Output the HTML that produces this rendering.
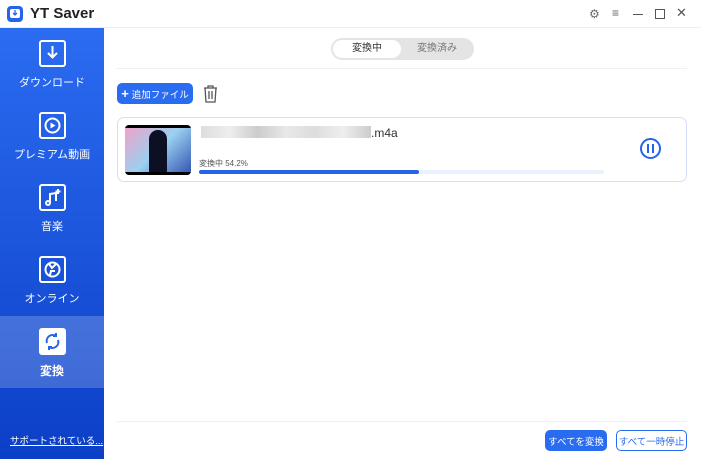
<!DOCTYPE html>
<html><head><meta charset="utf-8"><style>
*{margin:0;padding:0;box-sizing:border-box}
body{width:701px;height:459px;overflow:hidden;background:#fff;font-family:"Liberation Sans","Noto Sans CJK JP",sans-serif;position:relative}
.abs{position:absolute;white-space:nowrap}
.side{left:0;top:28px;width:104px;height:431px;background:linear-gradient(#2b6cf1,#0b3fc6)}
.item{position:absolute;left:0;width:104px;height:72px;color:#fff;font-size:11px;text-align:center}
.item .ic{position:absolute;left:39px;top:12px;width:27px;height:27px;border:2px solid #fff;border-radius:3px}
.item span{position:absolute;left:0;right:0;top:46px}
.btn{position:absolute;border-radius:5px;font-size:9.5px;white-space:nowrap;display:flex;align-items:center;justify-content:center}
</style></head><body>
<div class="abs" style="left:7px;top:6px;width:16px;height:16px;background:#2563eb;border-radius:4px"><div style="position:absolute;left:3px;top:3px;width:10px;height:9px;background:#fff;border-radius:2px"></div><svg style="position:absolute;left:5px;top:4px" width="6" height="7" viewBox="0 0 6 7" fill="none" stroke="#2563eb" stroke-width="1.3"><path d="M3 0v5M1 3l2 2 2-2"/></svg></div>
<div class="abs" style="left:30px;top:5px;font-size:15px;font-weight:bold;color:#222">YT Saver</div>
<div class="abs" style="left:589px;top:7px;font-size:12px;color:#666">⚙</div>
<div class="abs" style="left:612px;top:6px;font-size:12px;color:#666">≡</div>
<div class="abs" style="left:633px;top:14px;width:10px;height:1px;background:#555"></div>
<div class="abs" style="left:655px;top:9px;width:10px;height:10px;border:1.3px solid #555"></div>
<div class="abs" style="left:676px;top:5px;font-size:13px;color:#555">✕</div>
<div class="abs" style="left:0;top:27px;width:701px;height:1px;background:#eee"></div>
<div class="abs side">
<div class="item" style="top:0"><div class="ic"><svg width="23" height="23" viewBox="0 0 23 23" fill="none" stroke="#fff" stroke-width="2"><path d="M11.5 4v11M7 11l4.5 4.5L16 11"/></svg></div><span>ダウンロード</span></div>
<div class="item" style="top:72px"><div class="ic"><svg width="23" height="23" viewBox="0 0 23 23"><circle cx="11.5" cy="11.5" r="7" fill="none" stroke="#fff" stroke-width="2"/><path d="M9.5 8.5v6l5-3z" fill="#fff"/></svg></div><span>プレミアム動画</span></div>
<div class="item" style="top:144px"><div class="ic"><svg width="23" height="23" viewBox="0 0 23 23" fill="none" stroke="#fff" stroke-width="2"><path d="M9 17V8l6-1v8"/><circle cx="7" cy="17" r="2"/><path d="M17 3v5M14.5 5.5h5"/></svg></div><span>音楽</span></div>
<div class="item" style="top:216px"><div class="ic"><svg width="23" height="23" viewBox="0 0 23 23" fill="none" stroke="#fff" stroke-width="2"><circle cx="11.5" cy="11.5" r="7"/><path d="M8 6l3 4 4-4M9 17l1-4h4"/></svg></div><span>オンライン</span></div>
<div class="item" style="top:288px;background:rgba(255,255,255,0.2)"><div class="ic" style="background:#fff"><svg width="23" height="23" viewBox="0 0 23 23" fill="none" stroke="#2563eb" stroke-width="2"><path d="M6 13a6 6 0 0 1 9-7M17 10a6 6 0 0 1-9 7"/><path d="M15 3v3h-3M8 20v-3h3"/></svg></div><span style="font-weight:bold;font-size:12px">変換</span></div>
<div class="abs" style="left:10px;top:405px;font-size:9.5px;color:#fff;text-decoration:underline">サポートされている...</div>
</div>
<div class="abs" style="left:331px;top:38px;width:143px;height:22px;border-radius:11px;background:#e4e4e4"></div>
<div class="abs" style="left:333px;top:40px;width:68px;height:18px;border-radius:9px;background:#fff;font-size:10px;text-align:center;line-height:18px;color:#333">変換中</div>
<div class="abs" style="left:402px;top:40px;width:70px;height:18px;font-size:10px;text-align:center;line-height:18px;color:#777">変換済み</div>
<div class="abs" style="left:117px;top:68px;width:570px;height:1px;background:#eef0f4"></div>
<div class="btn" style="left:117px;top:83px;width:76px;height:21px;background:#2a6cf0;color:#fff"><b style="font-size:13px;margin-right:3px">+</b>追加ファイル</div>
<svg class="abs" style="left:203px;top:85px" width="15" height="18" viewBox="0 0 15 18" fill="none" stroke="#555" stroke-width="1.3"><path d="M1 3h13M5 3V1h5v2M2 3l1 14h9l1-14M6 6v8M9 6v8"/></svg>
<div class="abs" style="left:117px;top:117px;width:570px;height:65px;border:1px solid #d6defa;border-radius:7px"></div>
<div class="abs" style="left:125px;top:125px;width:66px;height:50px;border-radius:4px;background:linear-gradient(135deg,#f3a0c8,#9ad0f0 50%,#3050b0);overflow:hidden"><div style="position:absolute;left:24px;top:5px;width:18px;height:45px;background:#0d0f25;border-radius:9px 9px 0 0"></div><div style="position:absolute;left:0;right:0;top:0;height:3px;background:#000"></div><div style="position:absolute;left:0;right:0;bottom:0;height:3px;background:#000"></div></div>
<div class="abs" style="left:201px;top:126px;width:170px;height:12px;background:linear-gradient(90deg,#ddd,#eee,#ccc,#e8e8e8,#ddd,#eee,#ccc)"></div>
<div class="abs" style="left:371px;top:126px;font-size:12px;color:#333">.m4a</div>
<div class="abs" style="left:199px;top:158px;font-size:8px;color:#555">変換中 54.2%</div>
<div class="abs" style="left:199px;top:170px;width:405px;height:4px;border-radius:2px;background:#eaf0fd"></div>
<div class="abs" style="left:199px;top:170px;width:220px;height:4px;border-radius:2px;background:#2563eb"></div>
<div class="abs" style="left:640px;top:138px;width:21px;height:21px;border:2px solid #2563eb;border-radius:50%"><div style="position:absolute;left:5px;top:4px;width:2px;height:9px;background:#2563eb"></div><div style="position:absolute;left:10px;top:4px;width:2px;height:9px;background:#2563eb"></div></div>
<div class="abs" style="left:117px;top:421px;width:570px;height:1px;background:#eef0f4"></div>
<div class="btn" style="left:545px;top:430px;width:62px;height:21px;background:#2a6cf0;color:#fff">すべてを変換</div>
<div class="btn" style="left:616px;top:430px;width:71px;height:21px;border:1.5px solid #2a6cf0;color:#2a6cf0">すべて一時停止</div>
</body></html>
